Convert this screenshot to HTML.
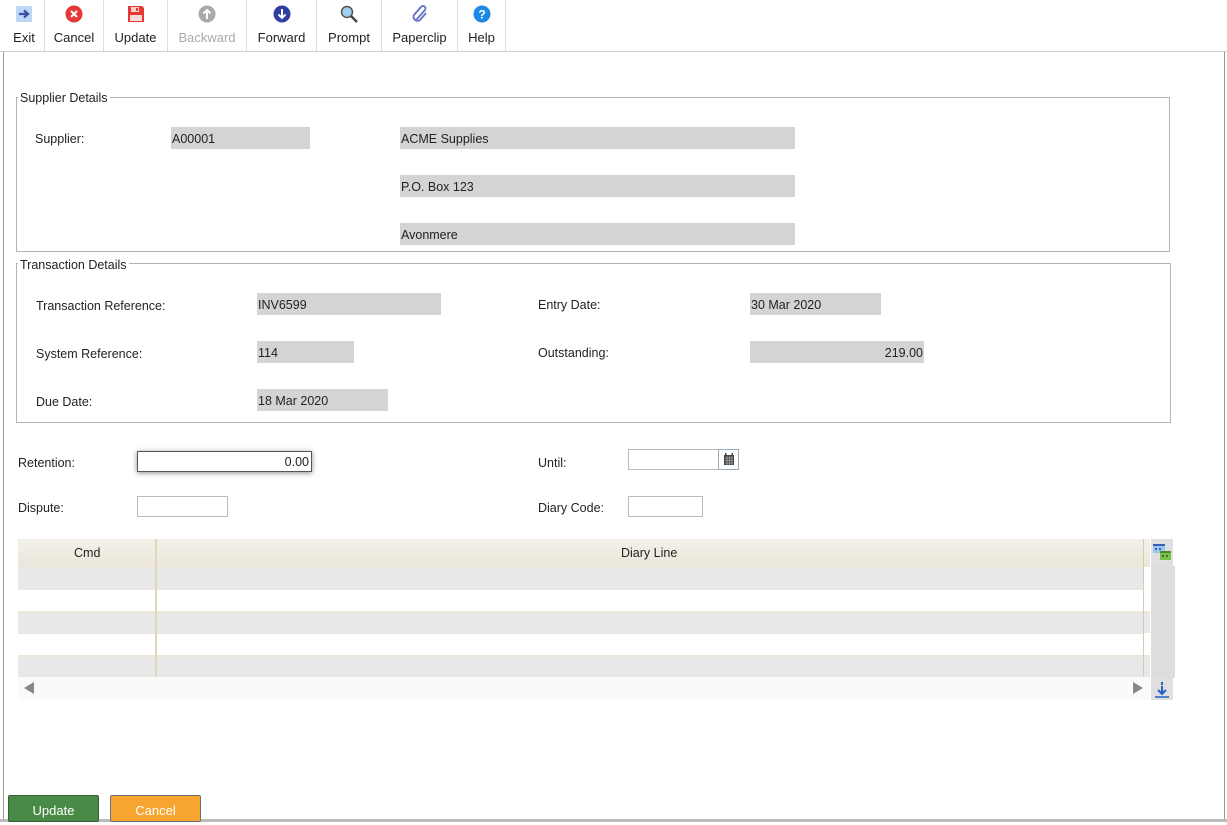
<!DOCTYPE html>
<html><head><meta charset="utf-8"><style>
*{box-sizing:border-box;margin:0;padding:0}
body{width:1227px;height:822px;position:relative;overflow:hidden;background:#fff;font-family:"Liberation Sans",sans-serif;font-size:12.5px;color:#222}
.a{position:absolute}
.t{position:absolute;margin-top:1px}
.tb{position:absolute;top:0;height:51px;text-align:center;font-size:13px;border-right:1px solid #ddd}
.tb span{position:absolute;left:0;right:0;top:30px}
.tb svg{position:absolute;top:5px;left:50%;margin-left:-9px}
.f{position:absolute;background:#d4d4d4;height:22px;line-height:24px;padding-left:1px}
.fs{position:absolute;border:1px solid #b4b4b4}
.lg{position:absolute;background:#fff;padding:0 2px;font-size:12.5px;margin-top:1px}
.in{position:absolute;border:1px solid #bbb;background:#fff;height:21px}
</style></head><body>
<div class="a" style="left:0;top:51px;width:1227px;height:1px;background:#ccc"></div>
<div class="a" style="left:3px;top:52px;width:1px;height:770px;background:#999"></div>
<div class="a" style="left:1224px;top:52px;width:1px;height:770px;background:#999"></div>
<div class="a" style="left:0;top:819px;width:1227px;height:3px;background:#bbb"></div>

<div class="tb" style="left:4px;width:41px"><svg width="18" height="18"><rect x="1" y="1" width="16" height="16" fill="#bcd8f5"/><path d="M4 9h8M9 5.5l4 3.5-4 3.5" stroke="#3b4ea5" stroke-width="2.2" fill="none"/></svg><span>Exit</span></div>
<div class="tb" style="left:45px;width:59px"><svg width="18" height="18"><circle cx="9" cy="9" r="8.5" fill="#e53935"/><path d="M6 6l6 6M12 6l-6 6" stroke="#fff" stroke-width="2"/></svg><span>Cancel</span></div>
<div class="tb" style="left:104px;width:64px"><svg width="18" height="18"><path d="M1 1h14l2 2v14H1z" fill="#e53935"/><rect x="4" y="2" width="8" height="5" fill="#fbd0d0"/><rect x="3" y="10" width="12" height="6" fill="#fbd8d8"/><rect x="9" y="3" width="2" height="3" fill="#e53935"/></svg><span>Update</span></div>
<div class="tb" style="left:168px;width:79px;color:#aaa"><svg width="18" height="18"><circle cx="9" cy="9" r="8.5" fill="#aaa"/><path d="M9 14V5M5.5 8.5L9 5l3.5 3.5" stroke="#fff" stroke-width="2" fill="none"/></svg><span>Backward</span></div>
<div class="tb" style="left:247px;width:70px"><svg width="18" height="18"><circle cx="9" cy="9" r="8.5" fill="#2f3fa0"/><path d="M9 4v9M5.5 9.5L9 13l3.5-3.5" stroke="#fff" stroke-width="2" fill="none"/></svg><span>Forward</span></div>
<div class="tb" style="left:317px;width:65px"><svg width="18" height="18"><circle cx="7" cy="7" r="5.5" fill="#9fd0f0" stroke="#555" stroke-width="1.5"/><path d="M11 11l6 6" stroke="#444" stroke-width="2.5"/></svg><span>Prompt</span></div>
<div class="tb" style="left:382px;width:76px"><svg width="18" height="18"><path d="M5 15L14 5a2.5 2.5 0 00-4-3L3 10a4 4 0 006 5l6-7" stroke="#6b78c8" stroke-width="2" fill="none"/></svg><span>Paperclip</span></div>
<div class="tb" style="left:458px;width:48px"><svg width="18" height="18"><circle cx="9" cy="9" r="8.5" fill="#1e88e5"/><text x="9" y="13.5" font-size="12" font-weight="bold" fill="#fff" text-anchor="middle" font-family="Liberation Sans">?</text></svg><span>Help</span></div>

<div class="fs" style="left:16px;top:97px;width:1154px;height:155px"></div>
<div class="lg" style="left:18px;top:90px">Supplier Details</div>
<div class="t" style="left:35px;top:131px">Supplier:</div>
<div class="f" style="left:171px;top:127px;width:139px">A00001</div>
<div class="f" style="left:400px;top:127px;width:395px">ACME Supplies</div>
<div class="f" style="left:400px;top:175px;width:395px">P.O. Box 123</div>
<div class="f" style="left:400px;top:223px;width:395px">Avonmere</div>

<div class="fs" style="left:16px;top:263px;width:1155px;height:160px"></div>
<div class="lg" style="left:18px;top:257px">Transaction Details</div>
<div class="t" style="left:36px;top:298px">Transaction Reference:</div>
<div class="f" style="left:257px;top:293px;width:184px">INV6599</div>
<div class="t" style="left:538px;top:297px">Entry Date:</div>
<div class="f" style="left:750px;top:293px;width:131px">30 Mar 2020</div>
<div class="t" style="left:36px;top:346px">System Reference:</div>
<div class="f" style="left:257px;top:341px;width:97px">114</div>
<div class="t" style="left:538px;top:345px">Outstanding:</div>
<div class="f" style="left:750px;top:341px;width:174px;text-align:right;padding-right:1px">219.00</div>
<div class="t" style="left:36px;top:394px">Due Date:</div>
<div class="f" style="left:257px;top:389px;width:131px">18 Mar 2020</div>

<div class="t" style="left:18px;top:455px">Retention:</div>
<div class="in" style="left:137px;top:451px;width:175px;border-color:#555;box-shadow:0 1px 5px rgba(0,0,0,.45);text-align:right;padding-right:2px;line-height:20px">0.00</div>
<div class="t" style="left:538px;top:455px">Until:</div>
<div class="in" style="left:628px;top:449px;width:92px"></div>
<div class="in" style="left:718px;top:449px;width:21px;border-color:#9ab"><svg width="19" height="19"><rect x="5" y="5" width="10" height="10" fill="#444"/><path d="M6 8h8M6 10.5h8M6 13h8M8 6v9M10.5 6v9M13 6v9" stroke="#aaa" stroke-width=".7"/><rect x="6" y="3" width="1.5" height="3" fill="#444"/><rect x="12.5" y="3" width="1.5" height="3" fill="#444"/></svg></div>
<div class="t" style="left:18px;top:500px">Dispute:</div>
<div class="in" style="left:137px;top:496px;width:91px"></div>
<div class="t" style="left:538px;top:500px">Diary Code:</div>
<div class="in" style="left:628px;top:496px;width:75px"></div>

<div class="a" style="left:18px;top:539px;width:1132px;height:28px;background:linear-gradient(#f3f1ea,#ebe6d8)"></div>
<div class="t" style="left:74px;top:545px">Cmd</div>
<div class="t" style="left:621px;top:545px">Diary Line</div>
<div class="a" style="left:18px;top:567px;width:1126px;height:22px;background:#e8e8e8"></div>
<div class="a" style="left:18px;top:589px;width:1126px;height:1px;background:#ebe6d8"></div>
<div class="a" style="left:18px;top:611px;width:1132px;height:22px;background:#e8e8e8;border-top:2px solid #ebe6d8"></div>
<div class="a" style="left:18px;top:633px;width:1126px;height:1px;background:#ebe6d8"></div>
<div class="a" style="left:18px;top:655px;width:1132px;height:22px;background:#e8e8e8;border-top:2px solid #ebe6d8"></div>
<div class="a" style="left:155px;top:539px;width:2px;height:138px;background:#e0d6bc"></div>
<div class="a" style="left:1143px;top:539px;width:1px;height:138px;background:#d6ccb4"></div>
<div class="a" style="left:18px;top:677px;width:1132px;height:23px;background:#fafafa"></div>
<div class="a" style="left:24px;top:682px;width:0;height:0;border-top:6px solid transparent;border-bottom:6px solid transparent;border-right:10px solid #888"></div>
<div class="a" style="left:1133px;top:682px;width:0;height:0;border-top:6px solid transparent;border-bottom:6px solid transparent;border-left:10px solid #888"></div>
<div class="a" style="left:1151px;top:539px;width:22px;height:161px;background:#e0e0e0"></div>
<div class="a" style="left:1151px;top:566px;width:24px;height:112px;background:#ddd"></div>
<svg class="a" style="left:1152px;top:543px" width="20" height="18"><rect x="1" y="1" width="12" height="9" fill="#9cc8f0"/><rect x="1" y="1" width="12" height="2" fill="#3d5fb8"/><rect x="3" y="5" width="2" height="2" fill="#3d5fb8"/><rect x="7" y="5" width="2" height="2" fill="#3d5fb8"/><rect x="8" y="8" width="11" height="9" fill="#7cbf4a"/><rect x="8" y="8" width="11" height="2" fill="#4a8c2a"/><rect x="10" y="12" width="2" height="2" fill="#3a7020"/><rect x="14" y="12" width="2" height="2" fill="#3a7020"/></svg>
<svg class="a" style="left:1153px;top:681px" width="18" height="18"><path d="M9 1v3M9 5v3M9 8v5M5 9l4 4 4-4" stroke="#2060c8" stroke-width="2" fill="none"/><path d="M2 16h14" stroke="#2060c8" stroke-width="1.5"/></svg>

<div class="a" style="left:8px;top:795px;width:91px;height:27px;background:#498a47;border:1px solid #3b5e3a;border-radius:2px;color:#fff;text-align:center;font-size:13px;line-height:29px">Update</div>
<div class="a" style="left:110px;top:795px;width:91px;height:27px;background:#f7a531;border:1px solid #6a7080;border-radius:2px;color:#fff;text-align:center;font-size:13px;line-height:29px">Cancel</div>
</body></html>
